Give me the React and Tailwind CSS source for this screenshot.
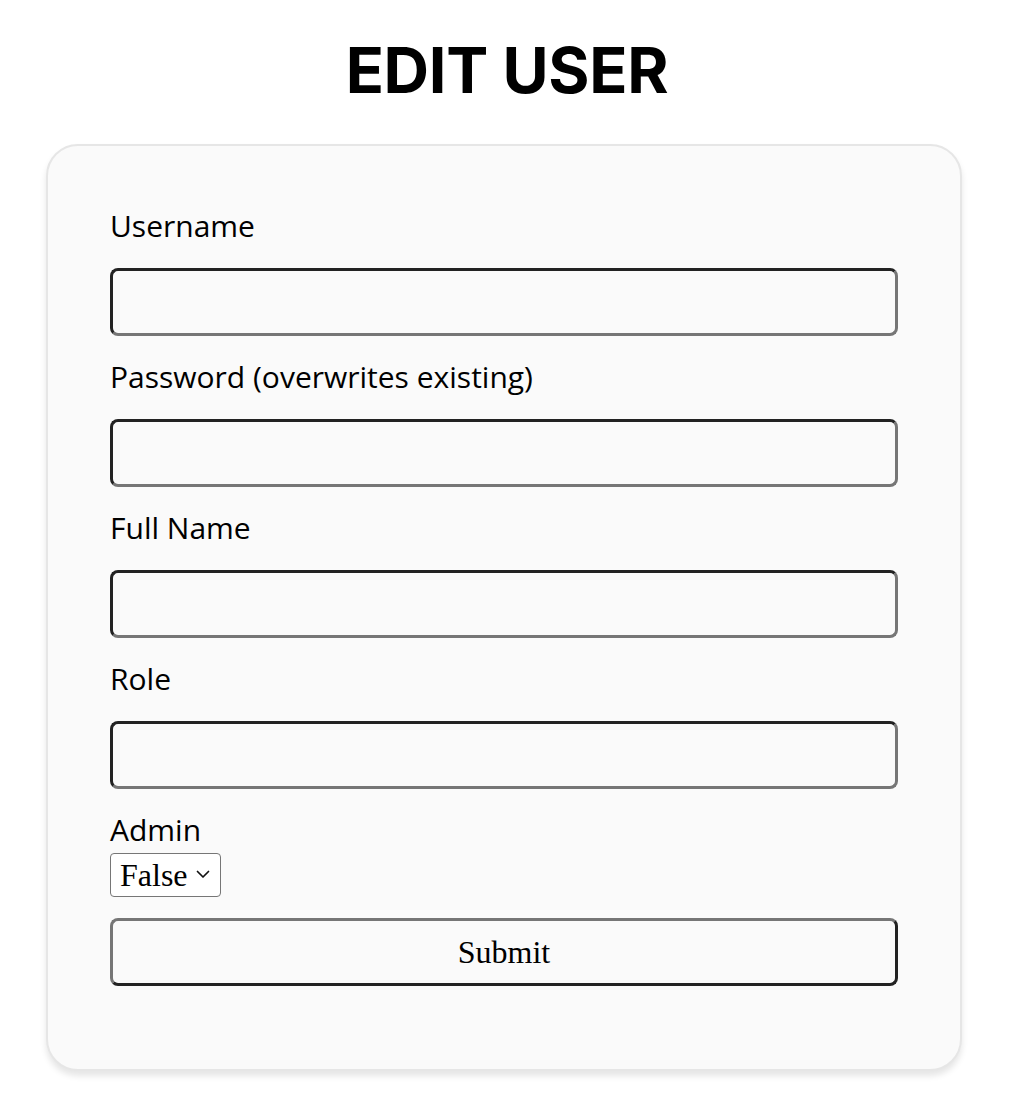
export default function App() {
  const fields = ["Username", "Password (overwrites existing)", "Full Name", "Role"];
  const label = "block text-[30px] leading-[42px] text-black";
  return (
    <div className="min-h-[1110px] bg-white" style={{ fontFamily: '"Open Sans", sans-serif' }}>
      <h1 className="pt-[34px] text-center text-[63px] font-bold leading-[72px] tracking-[-0.3px] text-black" style={{ fontFamily: '"Inter", sans-serif' }}>
        EDIT USER
      </h1>
      <div className="mx-[46px] mt-[38px] w-[916px] rounded-[32px] border-2 border-[#e6e6e6] bg-[#fafafa] px-[62px] pb-[83px] pt-[59px] shadow-[0_5px_6px_rgba(0,0,0,0.1)]">
        {fields.map((f) => (
          <div key={f} className="mb-[20px]">
            <label className={label}>{f}</label>
            <input className="mt-[21px] block h-[68px] w-full rounded-[8px] border-[3px] border-b-[#767676] border-l-[#222] border-r-[#767676] border-t-[#222] bg-[#fafafa]" />
          </div>
        ))}
        <label className={label}>Admin</label>
        <div className="relative mt-[2px] h-[44px] w-[111px]">
          <select
            className="block h-[44px] w-[111px] appearance-none rounded-[4px] border border-[#767676] bg-white pl-[9px] text-[32px] leading-none text-black"
            style={{ fontFamily: '"Liberation Serif", serif' }}
            defaultValue="False"
          >
            <option>False</option>
            <option>True</option>
          </select>
          <svg className="pointer-events-none absolute left-[86px] top-[17px]" width="14" height="9" viewBox="0 0 14 9" fill="none">
            <path d="M1.5 1.5 L7 7 L12.5 1.5" stroke="#111" strokeWidth="1.7" strokeLinecap="round" strokeLinejoin="round" />
          </svg>
        </div>
        <button
          className="mt-[21px] block h-[68px] w-full rounded-[8px] border-[3px] border-b-[#222] border-l-[#767676] border-r-[#222] border-t-[#767676] bg-[#fafafa] text-[32px] text-black"
          style={{ fontFamily: '"Liberation Serif", serif' }}
        >
          Submit
        </button>
      </div>
    </div>
  );
}
